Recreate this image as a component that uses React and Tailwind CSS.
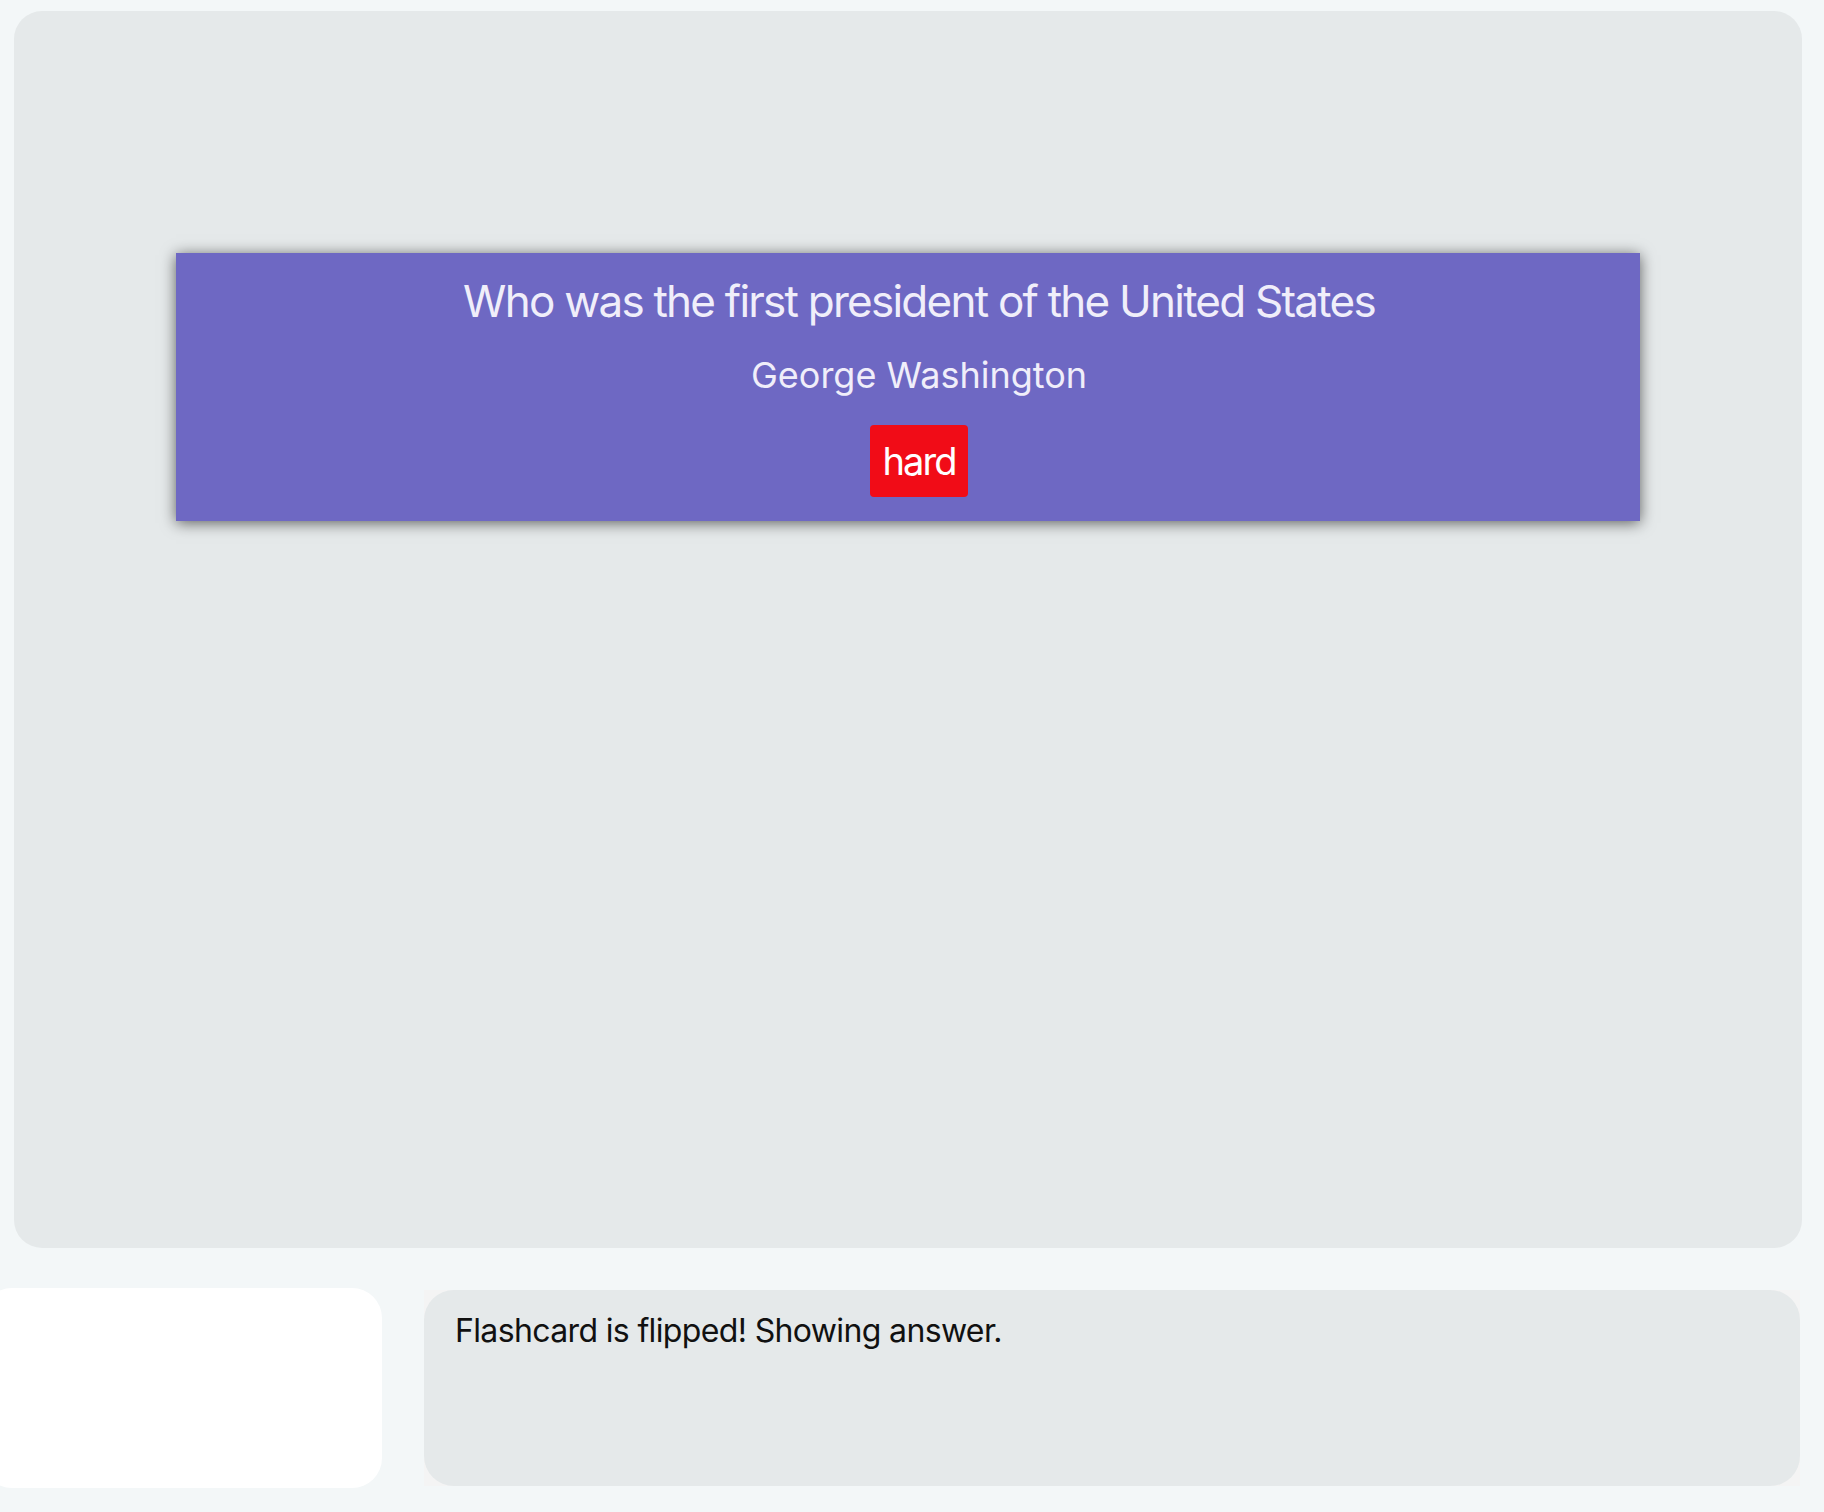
import React from "react";

const card = {
  question: "Who was the first president of the United States",
  answer: "George Washington",
  difficulty: "hard",
};

const App = () => {
  return (
    <div className="min-h-screen w-full overflow-hidden bg-[#f3f7f8] font-['Inter','Liberation_Sans',sans-serif]">
      <div className="pt-[11px] pl-[14px]">
        {/* study area */}
        <div className="w-[1788px] h-[1237px] rounded-[28px] bg-[#e5e9ea] pt-[242px]">
          <div className="mx-auto w-[1464px] h-[268px] bg-[#6e68c3] shadow-[0_2px_14px_rgba(0,0,0,0.6)] flex flex-col items-center pt-[22px] pl-[22px] text-[#f0eefa]">
            <h2 className="text-[44px] leading-[52px] tracking-[-0.04em]">{card.question}</h2>
            <p className="mt-[26px] text-[36px] leading-[44px]">{card.answer}</p>
            <span className="mt-[28px] bg-[#f10c17] text-white text-[38px] leading-[72px] tracking-[-0.05em] px-[12px] rounded-[4px]">
              {card.difficulty}
            </span>
          </div>
        </div>
      </div>

      <div className="mt-[40px] flex items-start">
        <div className="ml-[-18px] w-[400px] h-[200px] rounded-[30px] bg-white" />
        <div className="ml-[42px] mt-[2px] w-[1376px] h-[196px] bg-[#f4f4f4]">
          <div className="h-full rounded-[30px] bg-[#e5e9ea] pl-[31px] pt-[21px]">
            <p className="text-[32px] leading-[40px] tracking-[-0.02em] text-[#111]">
              Flashcard is flipped! Showing answer.
            </p>
          </div>
        </div>
      </div>
    </div>
  );
};

export default App;
